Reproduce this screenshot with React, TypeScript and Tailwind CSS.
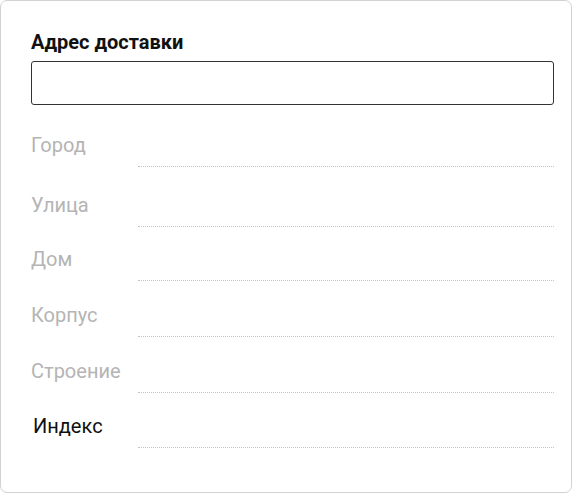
import React from "react";

const rows: { label: string; h: string; active?: boolean }[] = [
  { label: "Город", h: "h-[62px]" },
  { label: "Улица", h: "h-[60px]" },
  { label: "Дом", h: "h-[54px]" },
  { label: "Корпус", h: "h-[56px]" },
  { label: "Строение", h: "h-[56px]" },
  { label: "Индекс", h: "h-[55px]", active: true },
];

export default function App() {
  return (
    <div className="w-[573px] h-[494px] bg-white" style={{ fontFamily: "Roboto, 'Noto Sans', sans-serif" }}>
      <div className="w-[572px] h-[493px] border border-[#d2d2d2] rounded-[7px] bg-white pl-[30px] pr-[17px] pt-[29px] flex flex-col">
        <div className="text-[20px] leading-6 font-bold text-[#111]">Адрес доставки</div>
        <div className="mt-[7px] h-[44px] w-full border border-[#333] rounded-[3px] bg-white" />
        <div className="flex flex-col">
          {rows.map((r) => (
            <div key={r.label} className={`${r.h} flex items-end`}>
              <div
                className={`w-[107px] shrink-0 text-[20px] leading-6 mb-[10px] ${
                  r.active ? "text-[#111] pl-[2px]" : "text-[#b4b4b4]"
                }`}
              >
                {r.label}
              </div>
              <div className="flex-1 border-b border-dotted border-[#c4c4c4]" />
            </div>
          ))}
        </div>
      </div>
    </div>
  );
}
